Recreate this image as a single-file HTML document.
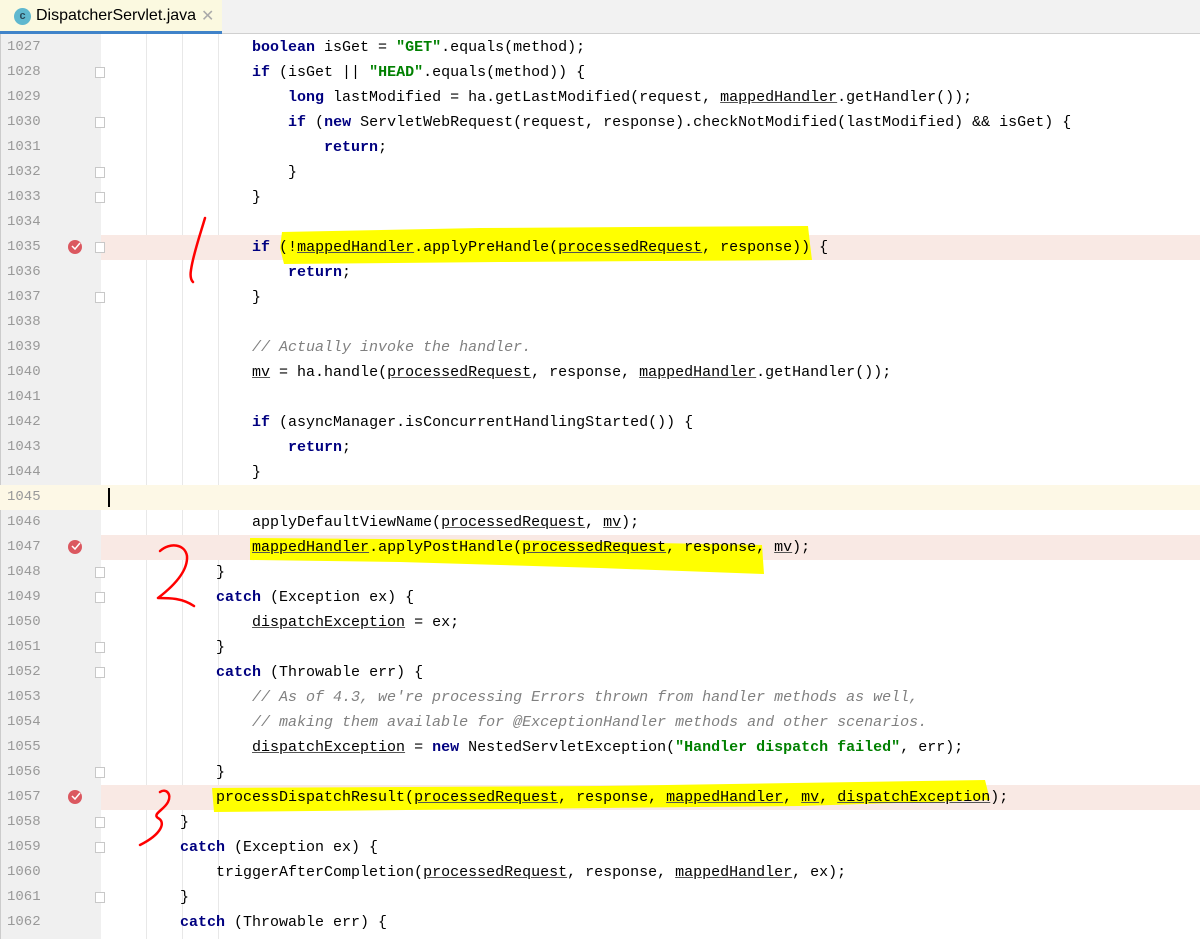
<!DOCTYPE html>
<html><head><meta charset="utf-8"><style>
*{margin:0;padding:0;box-sizing:border-box}
body{width:1200px;height:939px;overflow:hidden;background:#fff;position:relative;font-family:"Liberation Mono",monospace}
#tabbar{position:absolute;left:0;top:0;width:1200px;height:34px;background:#f2f2f2;border-bottom:1px solid #d0d0d0}
#tab{position:absolute;left:0;top:0;width:222px;height:34px;background:#fbf9e0;border-bottom:3px solid #4083c9}
#tab .ic{position:absolute;left:14px;top:8px;width:17px;height:17px;border-radius:50%;background:#5fb8cf;color:#2b4a5a;font:bold 11px "Liberation Sans",sans-serif;text-align:center;line-height:17px}
#tab .t{position:absolute;left:36px;top:7px;font:16px "Liberation Sans",sans-serif;color:#000}
#tab .x{position:absolute;left:201px;top:6px;font:16px "Liberation Sans",sans-serif;color:#aaa}
#gutter{position:absolute;left:0;top:34px;width:101px;height:905px;background:#f0f0f0;border-left:1px solid #ccc}
.row{position:absolute;left:0;width:1200px;height:25px}
.ln{position:absolute;left:7px;width:60px;font-size:14px;color:#999;line-height:25px;top:0}
.code{position:absolute;left:108px;top:0;font-size:15px;line-height:25px;white-space:pre;color:#000}
.k{color:#000080;font-weight:bold}
.s{color:#008000;font-weight:bold}
.c{color:#808080;font-style:italic}
.u{text-decoration:underline;text-decoration-color:#555}
.guide{position:absolute;top:34px;width:1px;height:905px;background:#e8e8e8}
.bp{position:absolute;left:68px;top:5px;width:14px;height:14px;border-radius:50%;background:#db5860}
.fold{position:absolute;left:95px;top:7px;width:10px;height:11px;border:1px solid #c8c8c8;background:#fff}
</style></head><body>
<div id="tabbar"><div id="tab"><div class="ic">c</div><div class="t">DispatcherServlet.java</div><div class="x">✕</div></div></div>
<div id="gutter"></div>
<div class="guide" style="left:146px"></div>
<div class="guide" style="left:182px"></div>
<div class="guide" style="left:218px"></div>

<div class="row" style="top:235px;background:#f9e9e4;left:101px;width:1099px"></div>
<div class="row" style="top:535px;background:#f9e9e4;left:101px;width:1099px"></div>
<div class="row" style="top:785px;background:#f9e9e4;left:101px;width:1099px"></div>
<div class="row" style="top:485px;background:#fdf8e6"></div>
<div style="position:absolute;left:108px;top:488px;width:2px;height:19px;background:#000"></div>

<svg style="position:absolute;left:0;top:0" width="1200" height="939">
<polygon fill="#ffff00" points="282,232 480,228 808,226 810,244 812,260 500,262 284,264 280,248"/>
<polygon fill="#ffff00" points="250,538 500,540 762,545 764,574 600,568 400,562 250,560"/>
<polygon fill="#ffff00" points="212,788 600,786 985,780 990,800 800,806 600,808 214,812"/>
</svg>

<div id="lines"></div>
<script>
(function(){
var L=[
[16,'<span class="k">boolean</span> isGet = <span class="s">"GET"</span>.equals(method);'],
[16,'<span class="k">if</span> (isGet || <span class="s">"HEAD"</span>.equals(method)) {'],
[20,'<span class="k">long</span> lastModified = ha.getLastModified(request, <span class="u">mappedHandler</span>.getHandler());'],
[20,'<span class="k">if</span> (<span class="k">new</span> ServletWebRequest(request, response).checkNotModified(lastModified) &amp;&amp; isGet) {'],
[24,'<span class="k">return</span>;'],
[20,'}'],[16,'}'],[0,''],
[16,'<span class="k">if</span> (!<span class="u">mappedHandler</span>.applyPreHandle(<span class="u">processedRequest</span>, response)) {'],
[20,'<span class="k">return</span>;'],[16,'}'],[0,''],
[16,'<span class="c">// Actually invoke the handler.</span>'],
[16,'<span class="u">mv</span> = ha.handle(<span class="u">processedRequest</span>, response, <span class="u">mappedHandler</span>.getHandler());'],
[0,''],
[16,'<span class="k">if</span> (asyncManager.isConcurrentHandlingStarted()) {'],
[20,'<span class="k">return</span>;'],[16,'}'],[0,''],
[16,'applyDefaultViewName(<span class="u">processedRequest</span>, <span class="u">mv</span>);'],
[16,'<span class="u">mappedHandler</span>.applyPostHandle(<span class="u">processedRequest</span>, response, <span class="u">mv</span>);'],
[12,'}'],
[12,'<span class="k">catch</span> (Exception ex) {'],
[16,'<span class="u">dispatchException</span> = ex;'],
[12,'}'],
[12,'<span class="k">catch</span> (Throwable err) {'],
[16,'<span class="c">// As of 4.3, we\'re processing Errors thrown from handler methods as well,</span>'],
[16,'<span class="c">// making them available for @ExceptionHandler methods and other scenarios.</span>'],
[16,'<span class="u">dispatchException</span> = <span class="k">new</span> NestedServletException(<span class="s">"Handler dispatch failed"</span>, err);'],
[12,'}'],
[12,'processDispatchResult(<span class="u">processedRequest</span>, response, <span class="u">mappedHandler</span>, <span class="u">mv</span>, <span class="u">dispatchException</span>);'],
[8,'}'],
[8,'<span class="k">catch</span> (Exception ex) {'],
[12,'triggerAfterCompletion(<span class="u">processedRequest</span>, response, <span class="u">mappedHandler</span>, ex);'],
[8,'}'],
[8,'<span class="k">catch</span> (Throwable err) {']
];
var bps={1035:1,1047:1,1057:1};
var folds={1028:1,1030:1,1032:1,1033:1,1035:1,1037:1,1048:1,1049:1,1051:1,1052:1,1056:1,1058:1,1059:1,1061:1};
var h='';
for(var i=0;i<L.length;i++){var n=1027+i,y=35+25*i;
h+='<div class="row" style="top:'+y+'px"><div class="ln">'+n+'</div>'+(bps[n]?'<div class="bp"></div>':'')+(folds[n]?'<div class="fold"></div>':'')+'<div class="code">'+' '.repeat(L[i][0])+L[i][1]+'</div></div>';}
document.getElementById('lines').innerHTML=h;
})();
</script>
<svg style="position:absolute;left:0;top:0;pointer-events:none" width="1200" height="939">
<g fill="none" stroke="#f00" stroke-width="2.5" stroke-linecap="round" stroke-linejoin="round">
<path d="M205,218 C200,235 193,255 191,270 C190,276 191,280 193,282"/>
<path d="M160,551 C170,542 185,544 187,556 C188,570 175,585 158,598 C170,598 182,598 194,606"/>
<path d="M160,792 C166,788 172,794 168,802 C164,810 152,814 158,818 C166,822 162,834 140,845"/>
</g>
<g>
<path d="M72,246 l3,3 l5,-6" stroke="#fff" stroke-width="1.5" fill="none"/>
<path d="M72,546 l3,3 l5,-6" stroke="#fff" stroke-width="1.5" fill="none"/>
<path d="M72,796 l3,3 l5,-6" stroke="#fff" stroke-width="1.5" fill="none"/>
</g>
</svg>
</body></html>
